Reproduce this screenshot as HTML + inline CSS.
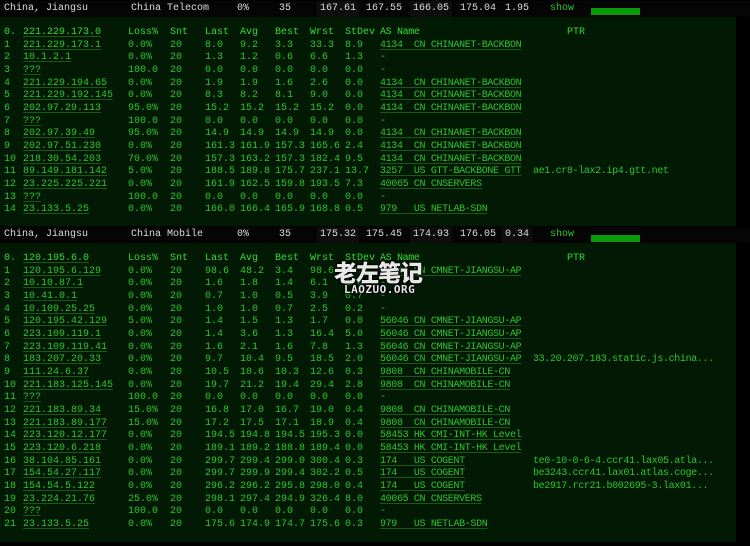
<!DOCTYPE html>
<html><head><meta charset="utf-8"><style>
*{margin:0;padding:0;box-sizing:border-box}
body{width:750px;height:546px;background:#000;overflow:hidden;position:relative;font-family:"Liberation Mono",monospace;font-size:10px;color:#2fc42f}
.hdr{position:absolute;left:0;width:750px;height:16px;background:#050505;color:#dcdcdc;line-height:16px}
.hdr span{position:absolute;top:0;white-space:pre}
.hdr .c{background:#0e0e0e;padding:0 3px;margin-left:-3px}
.panel{position:absolute;left:0;width:736px;background:#021a03}
.r{position:absolute;left:0;height:12.67px;line-height:12.67px;width:736px;white-space:pre}
.r span{position:absolute;top:0}
.u{text-decoration:underline;text-decoration-color:#145a14;text-underline-offset:2px}
.a{letter-spacing:-0.35px}
.hd{color:#3ad83a}
.bar{position:absolute;background:#0a9a0a}
.wm{position:absolute;color:#e8e8e8;font-family:"Noto Sans CJK SC",sans-serif;font-weight:900;text-shadow:0 0 2px #000,1px 1px 1px #000,-1px -1px 1px #000}
</style></head><body>

<div class="hdr" style="top:1px"><span style="left:4px">China, Jiangsu</span><span style="left:131px">China Telecom</span><span style="left:237px">0%</span><span style="left:279px">35</span><span class="c" style="left:320px">167.61</span><span style="left:366px">167.55</span><span class="c" style="left:413px">166.05</span><span style="left:460px">175.04</span><span style="left:505px">1.95</span><span style="left:550px;color:#2fc42f">show</span></div>
<div class="bar" style="left:591px;top:8px;width:49px;height:7px"></div>

<div class="panel" style="top:17px;height:209px"></div>
<div class="r hd" style="top:27px"><span style="left:4px">0.</span><span style="left:23px" class="u">221.229.173.0</span><span style="left:128px">Loss%</span><span style="left:170px">Snt</span><span style="left:205px">Last</span><span style="left:240px">Avg</span><span style="left:275px">Best</span><span style="left:310px">Wrst</span><span style="left:345px">StDev</span><span style="left:380px" class="a">AS Name</span><span style="left:567px">PTR</span></div>
<div class="r" style="top:39.7px"><span style="left:4px">1</span><span style="left:23px" class="u">221.229.173.1</span><span style="left:128px">0.0%</span><span style="left:170px">20</span><span style="left:205px">8.0</span><span style="left:240px">9.2</span><span style="left:275px">3.3</span><span style="left:310px">33.3</span><span style="left:345px">8.9</span><span style="left:380px" class="u a">4134  CN CHINANET-BACKBON</span></div>
<div class="r" style="top:52.3px"><span style="left:4px">2</span><span style="left:23px" class="u">10.1.2.1</span><span style="left:128px">0.0%</span><span style="left:170px">20</span><span style="left:205px">1.3</span><span style="left:240px">1.2</span><span style="left:275px">0.6</span><span style="left:310px">6.6</span><span style="left:345px">1.3</span><span style="left:380px">-</span></div>
<div class="r" style="top:65px"><span style="left:4px">3</span><span style="left:23px" class="u">???</span><span style="left:128px">100.0</span><span style="left:170px">20</span><span style="left:205px">0.0</span><span style="left:240px">0.0</span><span style="left:275px">0.0</span><span style="left:310px">0.0</span><span style="left:345px">0.0</span><span style="left:380px">-</span></div>
<div class="r" style="top:77.7px"><span style="left:4px">4</span><span style="left:23px" class="u">221.229.194.65</span><span style="left:128px">0.0%</span><span style="left:170px">20</span><span style="left:205px">1.9</span><span style="left:240px">1.9</span><span style="left:275px">1.6</span><span style="left:310px">2.6</span><span style="left:345px">0.0</span><span style="left:380px" class="u a">4134  CN CHINANET-BACKBON</span></div>
<div class="r" style="top:90.3px"><span style="left:4px">5</span><span style="left:23px" class="u">221.229.192.145</span><span style="left:128px">0.0%</span><span style="left:170px">20</span><span style="left:205px">8.3</span><span style="left:240px">8.2</span><span style="left:275px">8.1</span><span style="left:310px">9.0</span><span style="left:345px">0.0</span><span style="left:380px" class="u a">4134  CN CHINANET-BACKBON</span></div>
<div class="r" style="top:103px"><span style="left:4px">6</span><span style="left:23px" class="u">202.97.29.113</span><span style="left:128px">95.0%</span><span style="left:170px">20</span><span style="left:205px">15.2</span><span style="left:240px">15.2</span><span style="left:275px">15.2</span><span style="left:310px">15.2</span><span style="left:345px">0.0</span><span style="left:380px" class="u a">4134  CN CHINANET-BACKBON</span></div>
<div class="r" style="top:115.7px"><span style="left:4px">7</span><span style="left:23px" class="u">???</span><span style="left:128px">100.0</span><span style="left:170px">20</span><span style="left:205px">0.0</span><span style="left:240px">0.0</span><span style="left:275px">0.0</span><span style="left:310px">0.0</span><span style="left:345px">0.0</span><span style="left:380px">-</span></div>
<div class="r" style="top:128.3px"><span style="left:4px">8</span><span style="left:23px" class="u">202.97.39.49</span><span style="left:128px">95.0%</span><span style="left:170px">20</span><span style="left:205px">14.9</span><span style="left:240px">14.9</span><span style="left:275px">14.9</span><span style="left:310px">14.9</span><span style="left:345px">0.0</span><span style="left:380px" class="u a">4134  CN CHINANET-BACKBON</span></div>
<div class="r" style="top:141px"><span style="left:4px">9</span><span style="left:23px" class="u">202.97.51.230</span><span style="left:128px">0.0%</span><span style="left:170px">20</span><span style="left:205px">161.3</span><span style="left:240px">161.9</span><span style="left:275px">157.3</span><span style="left:310px">165.6</span><span style="left:345px">2.4</span><span style="left:380px" class="u a">4134  CN CHINANET-BACKBON</span></div>
<div class="r" style="top:153.7px"><span style="left:4px">10</span><span style="left:23px" class="u">218.30.54.203</span><span style="left:128px">70.0%</span><span style="left:170px">20</span><span style="left:205px">157.3</span><span style="left:240px">163.2</span><span style="left:275px">157.3</span><span style="left:310px">182.4</span><span style="left:345px">9.5</span><span style="left:380px" class="u a">4134  CN CHINANET-BACKBON</span></div>
<div class="r" style="top:166.3px"><span style="left:4px">11</span><span style="left:23px" class="u">89.149.181.142</span><span style="left:128px">5.0%</span><span style="left:170px">20</span><span style="left:205px">188.5</span><span style="left:240px">189.8</span><span style="left:275px">175.7</span><span style="left:310px">237.1</span><span style="left:345px">13.7</span><span style="left:380px" class="u a">3257  US GTT-BACKBONE GTT</span><span style="left:533px" class="a">ae1.cr8-lax2.ip4.gtt.net</span></div>
<div class="r" style="top:179px"><span style="left:4px">12</span><span style="left:23px" class="u">23.225.225.221</span><span style="left:128px">0.0%</span><span style="left:170px">20</span><span style="left:205px">161.9</span><span style="left:240px">162.5</span><span style="left:275px">159.8</span><span style="left:310px">193.5</span><span style="left:345px">7.3</span><span style="left:380px" class="u a">40065 CN CNSERVERS</span></div>
<div class="r" style="top:191.7px"><span style="left:4px">13</span><span style="left:23px" class="u">???</span><span style="left:128px">100.0</span><span style="left:170px">20</span><span style="left:205px">0.0</span><span style="left:240px">0.0</span><span style="left:275px">0.0</span><span style="left:310px">0.0</span><span style="left:345px">0.0</span><span style="left:380px">-</span></div>
<div class="r" style="top:204.3px"><span style="left:4px">14</span><span style="left:23px" class="u">23.133.5.25</span><span style="left:128px">0.0%</span><span style="left:170px">20</span><span style="left:205px">166.0</span><span style="left:240px">166.4</span><span style="left:275px">165.9</span><span style="left:310px">168.8</span><span style="left:345px">0.5</span><span style="left:380px" class="u a">979   US NETLAB-SDN</span></div>

<div class="hdr" style="top:227px"><span style="left:4px">China, Jiangsu</span><span style="left:131px">China Mobile</span><span style="left:237px">0%</span><span style="left:279px">35</span><span class="c" style="left:320px">175.32</span><span style="left:366px">175.45</span><span class="c" style="left:413px">174.93</span><span style="left:460px">176.05</span><span class="c" style="left:505px">0.34</span><span style="left:550px;color:#2fc42f">show</span></div>
<div class="bar" style="left:591px;top:235px;width:49px;height:7px"></div>

<div class="panel" style="top:243px;height:299px"></div>
<div class="r hd" style="top:253px"><span style="left:4px">0.</span><span style="left:23px" class="u">120.195.6.0</span><span style="left:128px">Loss%</span><span style="left:170px">Snt</span><span style="left:205px">Last</span><span style="left:240px">Avg</span><span style="left:275px">Best</span><span style="left:310px">Wrst</span><span style="left:345px">StDev</span><span style="left:380px" class="a">AS Name</span><span style="left:567px">PTR</span></div>
<div class="r" style="top:265.7px"><span style="left:4px">1</span><span style="left:23px" class="u">120.195.6.129</span><span style="left:128px">0.0%</span><span style="left:170px">20</span><span style="left:205px">98.6</span><span style="left:240px">48.2</span><span style="left:275px">3.4</span><span style="left:310px">98.6</span><span style="left:345px">30.2</span><span style="left:380px" class="u a">56046 CN CMNET-JIANGSU-AP</span></div>
<div class="r" style="top:278.3px"><span style="left:4px">2</span><span style="left:23px" class="u">10.10.87.1</span><span style="left:128px">0.0%</span><span style="left:170px">20</span><span style="left:205px">1.6</span><span style="left:240px">1.8</span><span style="left:275px">1.4</span><span style="left:310px">6.1</span><span style="left:345px">1.0</span><span style="left:380px">-</span></div>
<div class="r" style="top:291px"><span style="left:4px">3</span><span style="left:23px" class="u">10.41.0.1</span><span style="left:128px">0.0%</span><span style="left:170px">20</span><span style="left:205px">0.7</span><span style="left:240px">1.0</span><span style="left:275px">0.5</span><span style="left:310px">3.9</span><span style="left:345px">0.7</span><span style="left:380px">-</span></div>
<div class="r" style="top:303.7px"><span style="left:4px">4</span><span style="left:23px" class="u">10.109.25.25</span><span style="left:128px">0.0%</span><span style="left:170px">20</span><span style="left:205px">1.0</span><span style="left:240px">1.0</span><span style="left:275px">0.7</span><span style="left:310px">2.5</span><span style="left:345px">0.2</span><span style="left:380px">-</span></div>
<div class="r" style="top:316.3px"><span style="left:4px">5</span><span style="left:23px" class="u">120.195.42.129</span><span style="left:128px">5.0%</span><span style="left:170px">20</span><span style="left:205px">1.4</span><span style="left:240px">1.5</span><span style="left:275px">1.3</span><span style="left:310px">1.7</span><span style="left:345px">0.0</span><span style="left:380px" class="u a">56046 CN CMNET-JIANGSU-AP</span></div>
<div class="r" style="top:329px"><span style="left:4px">6</span><span style="left:23px" class="u">223.109.119.1</span><span style="left:128px">0.0%</span><span style="left:170px">20</span><span style="left:205px">1.4</span><span style="left:240px">3.6</span><span style="left:275px">1.3</span><span style="left:310px">16.4</span><span style="left:345px">5.0</span><span style="left:380px" class="u a">56046 CN CMNET-JIANGSU-AP</span></div>
<div class="r" style="top:341.7px"><span style="left:4px">7</span><span style="left:23px" class="u">223.109.119.41</span><span style="left:128px">0.0%</span><span style="left:170px">20</span><span style="left:205px">1.6</span><span style="left:240px">2.1</span><span style="left:275px">1.6</span><span style="left:310px">7.8</span><span style="left:345px">1.3</span><span style="left:380px" class="u a">56046 CN CMNET-JIANGSU-AP</span></div>
<div class="r" style="top:354.3px"><span style="left:4px">8</span><span style="left:23px" class="u">183.207.20.33</span><span style="left:128px">0.0%</span><span style="left:170px">20</span><span style="left:205px">9.7</span><span style="left:240px">10.4</span><span style="left:275px">9.5</span><span style="left:310px">18.5</span><span style="left:345px">2.0</span><span style="left:380px" class="u a">56046 CN CMNET-JIANGSU-AP</span><span style="left:533px" class="a">33.20.207.183.static.js.china...</span></div>
<div class="r" style="top:367px"><span style="left:4px">9</span><span style="left:23px" class="u">111.24.6.37</span><span style="left:128px">0.0%</span><span style="left:170px">20</span><span style="left:205px">10.5</span><span style="left:240px">10.6</span><span style="left:275px">10.3</span><span style="left:310px">12.6</span><span style="left:345px">0.3</span><span style="left:380px" class="u a">9808  CN CHINAMOBILE-CN</span></div>
<div class="r" style="top:379.7px"><span style="left:4px">10</span><span style="left:23px" class="u">221.183.125.145</span><span style="left:128px">0.0%</span><span style="left:170px">20</span><span style="left:205px">19.7</span><span style="left:240px">21.2</span><span style="left:275px">19.4</span><span style="left:310px">29.4</span><span style="left:345px">2.8</span><span style="left:380px" class="u a">9808  CN CHINAMOBILE-CN</span></div>
<div class="r" style="top:392.3px"><span style="left:4px">11</span><span style="left:23px" class="u">???</span><span style="left:128px">100.0</span><span style="left:170px">20</span><span style="left:205px">0.0</span><span style="left:240px">0.0</span><span style="left:275px">0.0</span><span style="left:310px">0.0</span><span style="left:345px">0.0</span><span style="left:380px">-</span></div>
<div class="r" style="top:405px"><span style="left:4px">12</span><span style="left:23px" class="u">221.183.89.34</span><span style="left:128px">15.0%</span><span style="left:170px">20</span><span style="left:205px">16.8</span><span style="left:240px">17.0</span><span style="left:275px">16.7</span><span style="left:310px">19.0</span><span style="left:345px">0.4</span><span style="left:380px" class="u a">9808  CN CHINAMOBILE-CN</span></div>
<div class="r" style="top:417.7px"><span style="left:4px">13</span><span style="left:23px" class="u">221.183.89.177</span><span style="left:128px">15.0%</span><span style="left:170px">20</span><span style="left:205px">17.2</span><span style="left:240px">17.5</span><span style="left:275px">17.1</span><span style="left:310px">18.9</span><span style="left:345px">0.4</span><span style="left:380px" class="u a">9808  CN CHINAMOBILE-CN</span></div>
<div class="r" style="top:430.3px"><span style="left:4px">14</span><span style="left:23px" class="u">223.120.12.177</span><span style="left:128px">0.0%</span><span style="left:170px">20</span><span style="left:205px">194.5</span><span style="left:240px">194.8</span><span style="left:275px">194.5</span><span style="left:310px">195.3</span><span style="left:345px">0.0</span><span style="left:380px" class="u a">58453 HK CMI-INT-HK Level</span></div>
<div class="r" style="top:443px"><span style="left:4px">15</span><span style="left:23px" class="u">223.120.6.218</span><span style="left:128px">0.0%</span><span style="left:170px">20</span><span style="left:205px">189.1</span><span style="left:240px">189.2</span><span style="left:275px">188.8</span><span style="left:310px">189.4</span><span style="left:345px">0.0</span><span style="left:380px" class="u a">58453 HK CMI-INT-HK Level</span></div>
<div class="r" style="top:455.7px"><span style="left:4px">16</span><span style="left:23px" class="u">38.104.85.161</span><span style="left:128px">0.0%</span><span style="left:170px">20</span><span style="left:205px">299.7</span><span style="left:240px">299.4</span><span style="left:275px">299.0</span><span style="left:310px">300.4</span><span style="left:345px">0.3</span><span style="left:380px" class="u a">174   US COGENT</span><span style="left:533px" class="a">te0-10-0-6-4.ccr41.lax05.atla...</span></div>
<div class="r" style="top:468.3px"><span style="left:4px">17</span><span style="left:23px" class="u">154.54.27.117</span><span style="left:128px">0.0%</span><span style="left:170px">20</span><span style="left:205px">299.7</span><span style="left:240px">299.9</span><span style="left:275px">299.4</span><span style="left:310px">302.2</span><span style="left:345px">0.5</span><span style="left:380px" class="u a">174   US COGENT</span><span style="left:533px" class="a">be3243.ccr41.lax01.atlas.coge...</span></div>
<div class="r" style="top:481px"><span style="left:4px">18</span><span style="left:23px" class="u">154.54.5.122</span><span style="left:128px">0.0%</span><span style="left:170px">20</span><span style="left:205px">296.2</span><span style="left:240px">296.2</span><span style="left:275px">295.8</span><span style="left:310px">298.0</span><span style="left:345px">0.4</span><span style="left:380px" class="u a">174   US COGENT</span><span style="left:533px" class="a">be2917.rcr21.b002695-3.lax01...</span></div>
<div class="r" style="top:493.7px"><span style="left:4px">19</span><span style="left:23px" class="u">23.224.21.76</span><span style="left:128px">25.0%</span><span style="left:170px">20</span><span style="left:205px">298.1</span><span style="left:240px">297.4</span><span style="left:275px">294.9</span><span style="left:310px">326.4</span><span style="left:345px">8.0</span><span style="left:380px" class="u a">40065 CN CNSERVERS</span></div>
<div class="r" style="top:506.3px"><span style="left:4px">20</span><span style="left:23px" class="u">???</span><span style="left:128px">100.0</span><span style="left:170px">20</span><span style="left:205px">0.0</span><span style="left:240px">0.0</span><span style="left:275px">0.0</span><span style="left:310px">0.0</span><span style="left:345px">0.0</span><span style="left:380px">-</span></div>
<div class="r" style="top:519px"><span style="left:4px">21</span><span style="left:23px" class="u">23.133.5.25</span><span style="left:128px">0.0%</span><span style="left:170px">20</span><span style="left:205px">175.6</span><span style="left:240px">174.9</span><span style="left:275px">174.7</span><span style="left:310px">175.6</span><span style="left:345px">0.3</span><span style="left:380px" class="u a">979   US NETLAB-SDN</span></div>

<div class="wm" style="left:334px;top:257px;font-size:23px;line-height:28px;letter-spacing:-1px">老左笔记</div>
<div class="wm" style="left:344px;top:284px;font-size:11px;line-height:12px;font-family:'DejaVu Sans Mono',monospace;font-weight:bold;letter-spacing:0.5px">LAOZUO.ORG</div>
</body></html>
